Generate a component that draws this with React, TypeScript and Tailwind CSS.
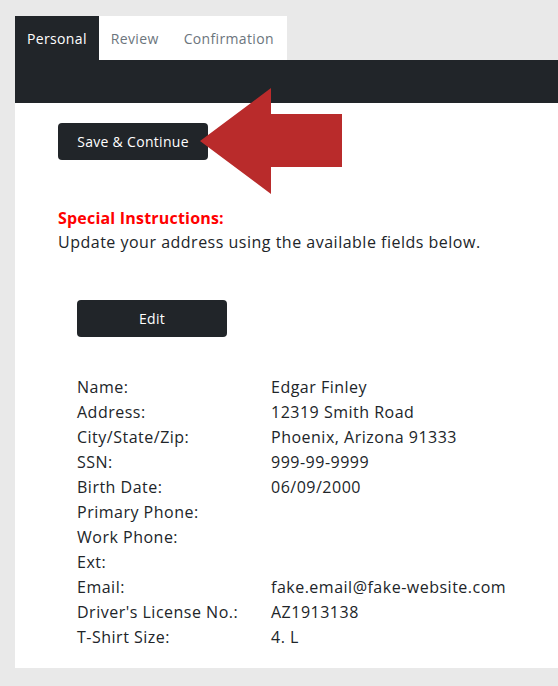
import React from "react";

const rows: [string, string][] = [
  ["Name:", "Edgar Finley"],
  ["Address:", "12319 Smith Road"],
  ["City/State/Zip:", "Phoenix, Arizona 91333"],
  ["SSN:", "999-99-9999"],
  ["Birth Date:", "06/09/2000"],
  ["Primary Phone:", ""],
  ["Work Phone:", ""],
  ["Ext:", ""],
  ["Email:", "fake.email@fake-website.com"],
  ["Driver's License No.:", "AZ1913138"],
  ["T-Shirt Size:", "4. L"],
];

export default function App() {
  return (
    <div
      className="min-h-screen bg-[#e9e9e9] pt-4 pl-[15px] pb-[18px] text-[#212529]"
      style={{ fontFamily: '"Open Sans", "Liberation Sans", sans-serif' }}
    >
      <div className="relative">
        <div className="flex h-[44px] text-[14px] tracking-[0.35px]">
          <div className="flex items-center bg-[#212529] px-[12px] text-white">Personal</div>
          <div className="flex items-center bg-white px-[12px] text-[#6c757d]">Review</div>
          <div className="flex items-center bg-white px-[13px] text-[#6c757d]">Confirmation</div>
        </div>
        <div className="h-[43px] bg-[#212529]" />
        <div className="bg-white pl-[43px] pt-[20px] pb-[18px] tracking-[0.5px]">
          <button className="flex h-[37px] w-[150px] items-center justify-center rounded-[4px] bg-[#212529] text-[14px] font-medium tracking-[0.3px] text-white">
            Save &amp; Continue
          </button>
          <div className="mt-[46px] text-[16px] leading-[24px] font-bold tracking-[0.2px] text-[#ff0000]">
            Special Instructions:
          </div>
          <div className="text-[16px] leading-[24px]">
            Update your address using the available fields below.
          </div>
          <div className="mt-[46px] pl-[19px]">
            <button className="flex h-[37px] w-[150px] items-center justify-center rounded-[4px] bg-[#212529] text-[14px] font-medium tracking-[0.3px] text-white">
              Edit
            </button>
            <div className="mt-[38px] flex flex-col text-[16px] leading-[25px]">
              {rows.map(([k, v]) => (
                <div key={k} className="flex">
                  <div className="w-[194px] shrink-0">{k}</div>
                  <div>{v}</div>
                </div>
              ))}
            </div>
          </div>
        </div>
        <svg
          className="absolute left-[185px] top-[72px]"
          width="142"
          height="107"
          viewBox="200 88 142 107"
        >
          <polygon
            points="200,141 271,88 271,114 342,114 342,167 271,167 271,194"
            fill="#b92b2b"
          />
        </svg>
      </div>
    </div>
  );
}
